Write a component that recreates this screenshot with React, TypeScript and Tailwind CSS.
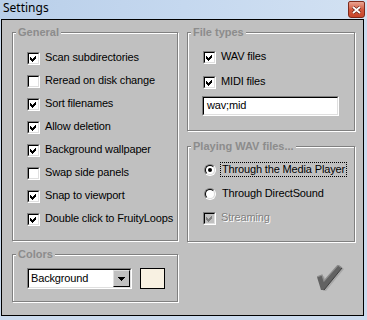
import type { ReactNode } from "react";

const ui = "font-['Liberation_Sans',Arial,sans-serif]";

function Check({ checked, disabled }: { checked?: boolean; disabled?: boolean }) {
  return (
    <div className="w-[13px] h-[13px] shrink-0 border border-t-[#808080] border-l-[#808080] border-b-white border-r-white">
      <div className={`w-full h-full border border-t-black border-l-black border-b-[#dfdfdf] border-r-[#dfdfdf] ${disabled ? "bg-[#c0c0c0]" : "bg-white"}`}>
        {checked && (
          <svg width="9" height="9" viewBox="0 0 9 9" className="block" shapeRendering="crispEdges">
            <polygon points="1,3 3,5 7,1 7,4 3,8 1,6" fill={disabled ? "#808080" : "#000"} />
          </svg>
        )}
      </div>
    </div>
  );
}

function Radio({ checked }: { checked?: boolean }) {
  return (
    <div className="w-[13px] h-[13px] shrink-0 flex items-center justify-center">
      <div className="w-[12px] h-[12px] rounded-full border border-t-[#808080] border-l-[#808080] border-b-white border-r-white">
        <div className="w-full h-full rounded-full border border-t-black border-l-black border-b-[#dfdfdf] border-r-[#dfdfdf] bg-white flex items-center justify-center">
          {checked && <div className="w-[4px] h-[4px] rounded-full bg-black" />}
        </div>
      </div>
    </div>
  );
}

function Group({ title, className, children }: { title: string; className: string; children?: ReactNode }) {
  return (
    <div className={`relative border border-[#808080] shadow-[inset_1px_1px_0_#fff,1px_1px_0_#fff] ${className}`}>
      <div className="absolute left-[3px] top-[-7px] bg-[#c0c0c0] px-[2px] text-[11px] leading-[13px] font-bold tracking-normal text-[#8c8c8c]">
        {title}
      </div>
      {children}
    </div>
  );
}

function Row({ h, children }: { h: string; children: ReactNode }) {
  return <div className={`flex items-center gap-[5px] ${h}`}>{children}</div>;
}

function Label({ children, disabled }: { children: ReactNode; disabled?: boolean }) {
  return (
    <span className={`mb-[2px] leading-[13px] whitespace-nowrap ${disabled ? "text-[#808080] [text-shadow:1px_1px_0_#fff]" : "text-black"}`}>
      {children}
    </span>
  );
}

const GENERAL: [string, boolean][] = [
  ["Scan subdirectories", true],
  ["Reread on disk change", false],
  ["Sort filenames", true],
  ["Allow deletion", true],
  ["Background wallpaper", true],
  ["Swap side panels", false],
  ["Snap to viewport", true],
  ["Double click to FruityLoops", true],
];

export default function App() {
  return (
    <div className={`w-[367px] h-[320px] flex flex-col overflow-hidden bg-[#cbdbee] ${ui}`}>
      {/* title bar */}
      <div className="h-[19px] shrink-0 flex items-start justify-between pl-[3px] pr-[2px] bg-gradient-to-r from-[#b9cfe9] via-[#c5d8ef] to-[#d2e1f2]">
        <span className="font-['Noto_Sans',sans-serif] text-[12px] leading-[16px] text-black">Settings</span>
        <div className="mt-px w-[17px] h-[17px] rounded-b-[3px] rounded-t-[2px] border border-[#7e2a1c] bg-gradient-to-b from-[#e9a493] via-[#d2593f] to-[#c8452a] flex items-center justify-center">
          <svg width="9" height="8" viewBox="0 0 9 8">
            <path d="M1 1 L8 7 M8 1 L1 7" stroke="#5a1a10" strokeWidth="3" />
            <path d="M1 1 L8 7 M8 1 L1 7" stroke="#fff" strokeWidth="1.8" />
          </svg>
        </div>
      </div>

      {/* client */}
      <div className="flex-1 pl-px pr-[3px] pb-[4px]">
        <div className="h-full border border-black bg-[#c0c0c0] flex gap-[9px] pl-[10px] pt-[12px] text-[11px] tracking-[-0.15px]">
          {/* left column */}
          <div className="w-[166px] flex flex-col gap-[13px]">
            <Group title="General" className="h-[209px] pt-[14px] pl-[14px]">
              {GENERAL.map(([t, c]) => (
                <Row key={t} h="h-[23px]">
                  <Check checked={c} />
                  <Label>{t}</Label>
                </Row>
              ))}
            </Group>

            <Group title="Colors" className="h-[48px] pt-[13px] pl-[14px]">
              <div className="flex gap-[8px]">
                <div className="w-[105px] h-[21px] border border-t-[#808080] border-l-[#808080] border-b-white border-r-white">
                  <div className="h-full border border-t-black border-l-black border-b-[#dfdfdf] border-r-[#dfdfdf] bg-white flex items-center justify-between">
                    <span className="pl-[2px] mb-px leading-[13px] text-black">Background</span>
                    <div className="w-[17px] h-full border border-t-[#dfdfdf] border-l-[#dfdfdf] border-b-black border-r-black bg-[#c0c0c0] flex items-center justify-center">
                      <svg width="7" height="4" viewBox="0 0 7 4" className="block" shapeRendering="crispEdges">
                        <polygon points="0,0 7,0 3.5,4" fill="#000" />
                      </svg>
                    </div>
                  </div>
                </div>
                <div className="w-[25px] h-[21px] border border-black bg-[#f8f1e2]" />
              </div>
            </Group>
          </div>

          {/* right column */}
          <div className="w-[168px] flex flex-col">
            <Group title="File types" className="h-[99px] pt-[12px] pl-[14px]">
              <div className="pl-px">
                <Row h="h-[24px]">
                  <Check checked />
                  <Label>WAV files</Label>
                </Row>
                <Row h="h-[26px]">
                  <Check checked />
                  <Label>MIDI files</Label>
                </Row>
              </div>
              <div className="mt-px w-[137px] h-[20px] border border-t-[#808080] border-l-[#808080] border-b-white border-r-white">
                <div className="h-full border border-t-black border-l-black border-b-[#dfdfdf] border-r-[#dfdfdf] bg-white flex items-center pl-[3px]">
                  <span className="mb-px leading-[13px] text-black">wav;mid</span>
                </div>
              </div>
            </Group>

            <Group title="Playing WAV files..." className="mt-[15px] h-[96px] pt-[11px] pl-[15px]">
              <div className="flex items-center gap-[4px] h-[24px]">
                <Radio checked />
                <span className="mb-[2px] leading-[13px] px-px border border-dotted border-black text-black whitespace-nowrap">
                  Through the Media Player
                </span>
              </div>
              <div className="flex items-center gap-[4px] h-[24px]">
                <Radio />
                <span className="mb-[2px] leading-[13px] px-px border border-transparent text-black whitespace-nowrap">
                  Through DirectSound
                </span>
              </div>
              <Row h="h-[25px]">
                <Check checked disabled />
                <Label disabled>Streaming</Label>
              </Row>
            </Group>

            <div className="flex justify-end pr-[10px] mt-[23px]">
              <svg width="28" height="27" viewBox="0 0 28 27">
                <polygon points="2,13 7,11 9,17 23,1 27,4 9,26 6,26" fill="#a8a8a8" />
                <polygon points="0,12 5,10 7,16 21,0 25,3 7,25 4,25" fill="#626262" />
                <path d="M0 12 L5 10 L7 16 L21 0 L25 3" fill="none" stroke="#8e8e8e" strokeWidth="1.2" />
                <path d="M25 3 L7 25" fill="none" stroke="#3e3e3e" strokeWidth="1" />
              </svg>
            </div>
          </div>
        </div>
      </div>
    </div>
  );
}
